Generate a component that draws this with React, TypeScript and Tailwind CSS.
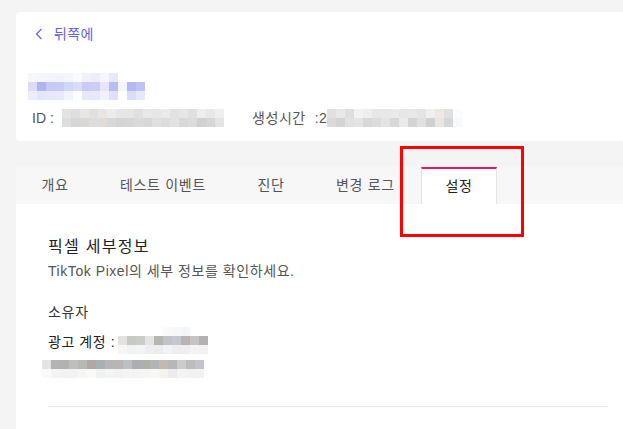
import React from 'react';

// 모자이크 처리된 영역 (픽셀 블록)
const Mosaic: React.FC<{ rows: string[][]; cell?: number; className?: string }> = ({
  rows,
  cell = 9,
  className = ''
}) => (
  <div className={`flex flex-col ${className}`}>
    {rows.map((row, i) => (
      <div key={i} className="flex">
        {row.map((c, j) => (
          <div key={j} style={{ width: cell, height: cell, background: c }} />
        ))}
      </div>
    ))}
  </div>
);

const nameRows = [
  ['#f6f6fd', '#f5f5fd', '#f4f4fd', '#f3f3fc', '#f5f5fd', '#fafafe', '#f1f1fc', '#ececfb', '#f5f5fd', '#e8e8fb', '#ffffff', '#ffffff', '#ffffff'],
  ['#dcdcf8', '#b0b4f4', '#c8c8f4', '#c6caf4', '#d0d8f8', '#dcdcf8', '#c8ccf4', '#ccccf4', '#e6e6fb', '#b8bcf4', '#f4f6fc', '#b4b8f4', '#c0c2f4'],
  ['#ececfb', '#e4e6fb', '#e6e8fb', '#e8eafb', '#f2f4fc', '#ffffff', '#e8e8fb', '#e8e8fb', '#f2f2fc', '#e0e0f8', '#ffffff', '#dcdcf8', '#e8e8fb']
];

const idRows = [
  ['#e3e3e3', '#dedede', '#e6e6e6', '#e0e0e0', '#e8e6e4', '#ececec', '#e6e6e6', '#e8e6e4', '#e0e0e0', '#e8e8e8', '#e6e6e6', '#eaeaea', '#e2e2e2', '#e6e6e6', '#e0e0e0', '#eeeeee', '#e8e8e8', '#efefef'],
  ['#dedede', '#d8d6d4', '#dad8d6', '#dcdcdc', '#e0dcd8', '#d8d8d8', '#d4d4d4', '#d6d6d6', '#dadada', '#d8d8d8', '#e0e0e0', '#dcdcdc', '#e2e2e2', '#d8d8d8', '#dcdcdc', '#d0d0d0', '#d6d6d6', '#e4e4e4']
];

const timeRows = [
  ['#e0e0e0', '#e8e8e8', '#dcdedf', '#f2f2f2', '#eeeeee', '#e6e8e8', '#e8e8e8', '#eaeaea', '#e6e6e6', '#e8e8e8', '#e4e4e4', '#eef0f0', '#ece8e4', '#e0e0e0', '#fafcfe'],
  ['#dadada', '#d4d4d4', '#e0e2e2', '#e4e4e4', '#d8d8d8', '#dcdcdc', '#e4e4e4', '#d8d8d8', '#eaeaea', '#d4d4d4', '#e0e0e0', '#d0d0d0', '#e8e6e2', '#d6d6d6', '#f6f8fa']
];

const accountRows = [
  ['#ffffff', '#ffffff', '#ffffff', '#ffffff', '#ffffff', '#fafafa', '#f6f8fa', '#f4f6f8', '#ffffff', '#ffffff'],
  ['#e4e2e0', '#c8c8c6', '#cacccc', '#e2e4e6', '#b8b4b0', '#c0c4c8', '#c4c8cc', '#b8b4b4', '#c8c4c4', '#b0b2b4'],
  ['#f6f6f6', '#f2f2f2', '#f4f4f4', '#eeeef2', '#ececec', '#f0f2f4', '#eeeeee', '#f0eeee', '#f4f4f4', '#f2f2f2']
];

const lineRows = [
  ['#e4e4e4', '#b4b4b4', '#b2b2b2', '#c0bebc', '#b6b8b8', '#b0a8a4', '#a8b0b4', '#b6b6b6', '#b8b6b4', '#bcc0c4', '#aeaeb2', '#b0b0aa', '#b2b4b6', '#c2b8b0', '#b4b8bc', '#cccccc', '#bcbcba', '#c4c4c8'],
  ['#fafafa', '#f4f4f4', '#f2f2f2', '#f2f2f2', '#f6f6f6', '#fafaf8', '#f0f2f2', '#f4f4f4', '#f2f2f2', '#f4f6f6', '#f4f4f4', '#f6f6f6', '#f8f8f6', '#f6f4f2', '#ececec', '#f4f4f4', '#f2f2f2', '#f2f2f2']
];

const tabs = [
  { label: '개요', w: 'w-[78px]' },
  { label: '테스트 이벤트', w: 'w-[138px]' },
  { label: '진단', w: 'w-[78px]' },
  { label: '변경 로그', w: 'w-[111px]' }
];

export default function App() {
  return (
    <div
      className="relative w-[623px] h-[429px] overflow-hidden bg-[#f4f4f5] pl-4 pt-3"
      style={{ fontFamily: '"Liberation Sans", "Noto Sans CJK KR", sans-serif' }}
    >
      {/* 상단 정보 카드 */}
      <div className="w-[620px] rounded bg-white pt-[10px] pb-[14px] pl-3">
        <div className="flex h-6 items-center gap-[11px] pl-[7px] text-[14px] tracking-[0.03em] text-[#5f63ee]">
          <svg width="8" height="12" viewBox="0 0 8 12" fill="none">
            <path d="M6.5 1 L1.5 6 L6.5 11" stroke="currentColor" strokeWidth="1.2" />
          </svg>
          <span>뒤쪽에</span>
        </div>
        <Mosaic rows={nameRows} className="mt-[27px]" />
        <div className="mt-[9px] flex h-[18px] items-center text-[14px] text-[#555]">
          <span className="w-[34px] pl-1">ID :</span>
          <Mosaic rows={idRows} />
          <span className="ml-7 tracking-[0.04em]">생성시간 &nbsp;:2</span>
          <Mosaic rows={timeRows} />
        </div>
      </div>

      {/* 탭 + 설정 카드 */}
      <div className="mt-[25px] h-[263px] w-[620px] rounded-t bg-white">
        <div className="flex h-[38px] items-end rounded-t bg-[#f7f7f7] text-[14px] tracking-[0.05em] text-[#555]">
          {tabs.map((t) => (
            <div key={t.label} className={`flex h-full items-center justify-center ${t.w}`}>
              {t.label}
            </div>
          ))}
          <div className="flex h-[37px] w-[76px] items-center justify-center border-x border-t-2 border-x-[#e4e4e4] border-t-[#f0145a] bg-white text-[#222]">
            설정
          </div>
        </div>

        <div className="pl-8 pt-[32px]">
          <div className="text-[16px] leading-[22px] tracking-[0.08em] text-[#222]">픽셀 세부정보</div>
          <div className="mt-[3px] text-[14px] leading-[20px] tracking-[0.04em] text-[#555]">
            TikTok Pixel의 세부 정보를 확인하세요.
          </div>
          <div className="mt-[21px] text-[14px] leading-[20px] tracking-[0.05em] text-[#333]">소유자</div>
          <div className="mt-[10px] flex h-[20px] items-center text-[14px] tracking-[0.04em] text-[#222]">
            <span className="w-[70px]">광고 계정 :</span>
            <Mosaic rows={accountRows} className="mt-[-4px]" />
          </div>
          <Mosaic rows={lineRows} className="ml-[-6px] mt-[8px]" />
          <div className="mt-[28px] h-px w-[560px] bg-[#e8e8e8]" />
        </div>
      </div>

      {/* 주석 표시 (빨간 박스) */}
      <div className="absolute left-[400px] top-[146px] h-[91px] w-[124px] border-[3px] border-[#ff0000]" />
    </div>
  );
}
